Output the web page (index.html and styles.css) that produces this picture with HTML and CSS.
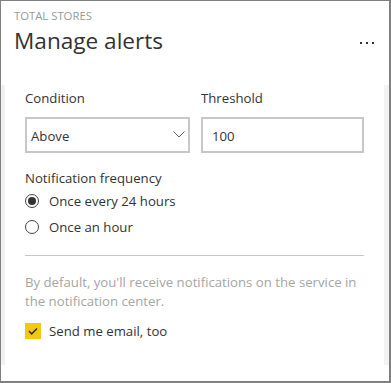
FILE: index.html
```html
<!DOCTYPE html>
<html lang="en">
<head>
    <meta charset="UTF-8">
    <meta name="viewport" content="width=device-width, initial-scale=1.0">
    <title>Manage alerts</title>
    <link rel="stylesheet" href="styles.css">
</head>
<body>

<div class="frame">
    <header class="head">
        <div class="kicker">TOTAL STORES</div>
        <div class="title-row">
            <h1>Manage alerts</h1>
            <span class="more"><i></i><i></i><i></i></span>
        </div>
    </header>

    <div class="panel">
        <div class="strip-left"></div>
        <div class="content">
            <div class="fields">
                <div class="field">
                    <label>Condition</label>
                    <div class="box select">
                        <span>Above</span>
                        <svg width="12" height="7" viewBox="0 0 12 7"><path d="M0.5 0.5 L6 6 L11.5 0.5" fill="none" stroke="#666" stroke-width="1"/></svg>
                    </div>
                </div>
                <div class="field">
                    <label>Threshold</label>
                    <div class="box"><span>100</span></div>
                </div>
            </div>

            <div class="group-label">Notification frequency</div>
            <div class="radio checked"><span class="dot"></span>Once every 24 hours</div>
            <div class="radio"><span class="dot"></span>Once an hour</div>

            <hr class="divider">

            <p class="note">By default, you'll receive notifications on the service in the notification center.</p>

            <div class="check">
                <span class="tick">
                    <svg width="16" height="16" viewBox="0 0 16 16"><path d="M4 8.2 L6.7 10.8 L12 5.5" fill="none" stroke="#333" stroke-width="1.6"/></svg>
                </span>
                Send me email, too
            </div>
        </div>
        <div class="strip-right"></div>
    </div>
</div>

</body>
</html>
```

FILE: styles.css
```css
* {
    box-sizing: border-box;
}
body {
    margin: 0;
    font-family: "Open Sans", "Noto Sans", sans-serif;
    color: #333;
    background: white;
}
.frame {
    width: 391px;
    height: 383px;
    border: solid #808080;
    border-width: 1px 2px 2px 1px;
    display: flex;
    flex-direction: column;
}
.head {
    padding: 7px 14px 0 13px;
    height: 84px;
}
.kicker {
    font-size: 11.3px;
    line-height: 15px;
    color: #999;
}
.title-row {
    display: flex;
    justify-content: space-between;
    align-items: center;
}
h1 {
    margin: 0;
    font-size: 22.6px;
    font-weight: normal;
    line-height: 36px;
    color: #333;
}
.more {
    display: flex;
    gap: 4px;
    margin-right: 1px;
    margin-top: 3px;
}
.more i {
    width: 2px;
    height: 2px;
    background: #333;
}
.panel {
    height: 280px;
    display: flex;
}
.strip-left {
    width: 4px;
    background: #f1f1f1;
}
.strip-right {
    width: 5px;
    background: #f3f3f3;
}
.content {
    flex: 1;
    padding: 3px 20px 0 20px;
    font-size: 13.2px;
}
.fields {
    display: grid;
    grid-template-columns: 165px 1fr;
    gap: 11px;
}
.field label {
    display: block;
    line-height: 20px;
    margin-bottom: 9px;
}
.box {
    height: 36px;
    border: 2px solid #c8c8c8;
    display: flex;
    align-items: center;
    justify-content: space-between;
    padding: 0 0 0 4px;
}
.box span {
    margin-top: 1px;
}
.select {
    padding-right: 3px;
}
.select svg {
    margin-top: -2px;
}
.field:nth-child(2) .box {
    padding-left: 9px;
}
.group-label {
    line-height: 20px;
    margin-top: 15px;
}
.radio {
    height: 26px;
    display: flex;
    align-items: center;
    gap: 10px;
}
.dot {
    width: 14px;
    height: 14px;
    border: 1px solid #444;
    border-radius: 50%;
    display: flex;
    align-items: center;
    justify-content: center;
}
.checked .dot::after {
    content: "";
    width: 8px;
    height: 8px;
    border-radius: 50%;
    background: #333;
}
.divider {
    border: none;
    border-top: 1px solid #c8c8c8;
    margin: 15px 0 0 0;
}
.note {
    margin: 17px 0 0 0;
    line-height: 19px;
    color: #a6a6a6;
}
.check {
    margin-top: 10px;
    height: 20px;
    display: flex;
    align-items: center;
    gap: 8px;
}
.tick {
    width: 16px;
    height: 16px;
    background: #f2c811;
    display: flex;
}
```
